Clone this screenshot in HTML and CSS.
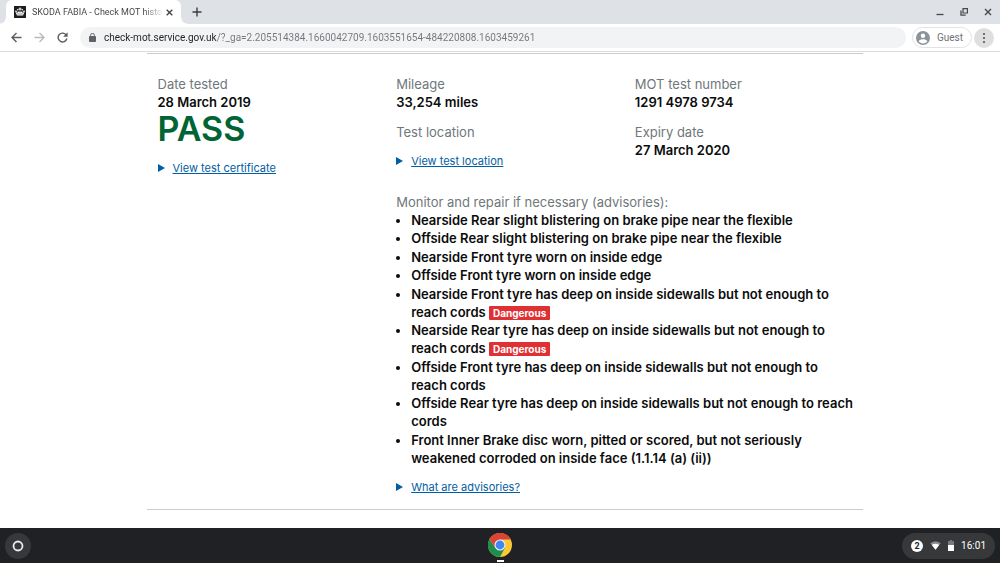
FILE: index.html
```html
<!DOCTYPE html>
<html lang="en">
<head>
  <meta charset="UTF-8">
  <title>SKODA FABIA - Check MOT history</title>
  <link rel="stylesheet" href="styles.css">
</head>
<body>

<header class="browser">
  <div class="tabstrip">
    <div class="tab">
      <svg class="favicon" viewBox="0 0 24 24">
        <rect width="24" height="24" fill="#1d1d1d"/>
        <g fill="#fff">
          <path d="M11 3h2v2h2v2h-2v2h-2V7H9V5h2z"/>
          <circle cx="7.500" cy="7.500" r="1.500"/>
          <circle cx="16.500" cy="7.500" r="1.500"/>
          <circle cx="4" cy="10.500" r="1.700"/>
          <circle cx="20" cy="10.500" r="1.700"/>
          <path d="M3 12l3 7h12l3-7-4 1.500-1-3.500-2.500 3L12 9l-1.500 4L8 10l-1 3.500z"/>
        </g>
        <path d="M6 16h12" stroke="#1d1d1d"/>
      </svg>
      <span class="tab-title">SKODA FABIA - Check MOT histo</span>
      <button class="icon-button" aria-label="Close tab">
        <svg width="7" height="7" viewBox="0 0 7 7"><path d="M.7.7l5.600 5.600M6.300.7L.7 6.300" stroke="#3c4043" stroke-width="1.300"/></svg>
      </button>
    </div>
    <button class="icon-button new-tab" aria-label="New tab">
      <svg width="10" height="10" viewBox="0 0 10 10"><path d="M5 .5v9M.5 5h9" stroke="#3c4043" stroke-width="1.400"/></svg>
    </button>
    <div class="window-buttons">
      <button class="icon-button" aria-label="Minimise">
        <svg width="8" height="8" viewBox="0 0 8 8"><path d="M.5 6.500h7" stroke="#45484c" stroke-width="1.300"/></svg>
      </button>
      <button class="icon-button" aria-label="Restore">
        <svg width="8" height="8" viewBox="0 0 8 8" fill="none" stroke="#45484c"><path d="M3 .6h4.400V5H3z" stroke-width="1.200"/><path d="M1 2.500v4.700h4.700" stroke-width="1.300"/></svg>
      </button>
      <button class="icon-button" aria-label="Close">
        <svg width="8" height="8" viewBox="0 0 8 8"><path d="M1 1l6 6M7 1L1 7" stroke="#45484c" stroke-width="1.400"/></svg>
      </button>
    </div>
  </div>

  <div class="toolbar">
    <button class="icon-button" aria-label="Back">
      <svg width="11" height="11" viewBox="0 0 11 11" fill="none" stroke="#5a5d61" stroke-width="1.400"><path d="M10.500 5.500H1.200M5.500 1L1 5.500 5.500 10"/></svg>
    </button>
    <button class="icon-button" aria-label="Forward">
      <svg width="11" height="11" viewBox="0 0 11 11" fill="none" stroke="#b9bbbe" stroke-width="1.400"><path d="M.5 5.500h9.300M5.500 1L10 5.500 5.500 10"/></svg>
    </button>
    <button class="icon-button" aria-label="Reload">
      <svg width="11" height="11" viewBox="0 0 11 11"><path d="M9.300 3.300A4.400 4.400 0 1 0 9.800 6.500" fill="none" stroke="#5a5d61" stroke-width="1.400"/><path d="M10.600.3v4.500H6.100z" fill="#5a5d61"/></svg>
    </button>
    <div class="omnibox">
      <svg width="7" height="9" viewBox="0 0 7 9"><rect y="3" width="7" height="6" rx=".8" fill="#5f6368"/><path d="M1.600 3.500V2.300a1.900 1.900 0 0 1 3.800 0v1.200" fill="none" stroke="#5f6368"/></svg>
      <input class="url" type="text" aria-label="Address" value="check-mot.service.gov.uk/?_ga=2.205514384.1660042709.1603551654-484220808.1603459261">
    </div>
    <button class="profile">
      <svg width="14" height="14" viewBox="0 0 14 14"><circle cx="7" cy="7" r="7" fill="#8c9299"/><circle cx="7" cy="4.800" r="2.200" fill="#fff"/><path d="M2.600 10.300C3.600 8.700 5.300 8.200 7 8.200s3.400.5 4.400 2.100C10.400 11.700 8.900 12.400 7 12.400s-3.400-.7-4.400-2.100z" fill="#fff"/></svg>
      Guest
    </button>
    <button class="icon-button menu" aria-label="Menu">
      <svg width="4" height="12" viewBox="0 0 4 12" fill="#55585c"><circle cx="2" cy="2" r="1.100"/><circle cx="2" cy="6" r="1.100"/><circle cx="2" cy="10" r="1.100"/></svg>
    </button>
  </div>
</header>

<main class="page">
  <section class="mot-test">
    <div class="column">
      <div class="label">Date tested</div>
      <div class="value">28 March 2019</div>
      <div class="result">PASS</div>
      <details>
        <summary><span>View test certificate</span></summary>
      </details>
    </div>
    <div class="column">
      <div class="label">Mileage</div>
      <div class="value">33,254 miles</div>
      <div class="label second">Test location</div>
      <details>
        <summary><span>View test location</span></summary>
      </details>
    </div>
    <div class="column">
      <div class="label">MOT test number</div>
      <div class="value">1291 4978 9734</div>
      <div class="label second">Expiry date</div>
      <div class="value">27 March 2020</div>
    </div>
    <div class="column advisories">
      <div class="label">Monitor and repair if necessary (advisories):</div>
      <ul>
        <li>Nearside Rear slight blistering on brake pipe near the flexible</li>
        <li>Offside Rear slight blistering on brake pipe near the flexible</li>
        <li>Nearside Front tyre worn on inside edge</li>
        <li>Offside Front tyre worn on inside edge</li>
        <li>Nearside Front tyre has deep on inside sidewalls but not enough to reach cords <span class="tag">Dangerous</span></li>
        <li>Nearside Rear tyre has deep on inside sidewalls but not enough to reach cords <span class="tag">Dangerous</span></li>
        <li>Offside Front tyre has deep on inside sidewalls but not enough to reach cords</li>
        <li>Offside Rear tyre has deep on inside sidewalls but not enough to reach cords</li>
        <li>Front Inner Brake disc worn, pitted or scored, but not seriously weakened corroded on inside face (1.1.14 (a) (ii))</li>
      </ul>
      <details>
        <summary><span>What are advisories?</span></summary>
      </details>
    </div>
  </section>
</main>

<footer class="shelf">
  <button class="launcher" aria-label="Launcher">
    <svg width="12" height="12" viewBox="0 0 12 12"><circle cx="6" cy="6" r="4.500" fill="none" stroke="#e8eaed" stroke-width="1.800"/></svg>
  </button>
  <button class="app" aria-label="Chrome">
    <svg width="24" height="24" viewBox="0 0 24 24">
      <circle cx="12" cy="12" r="12" fill="#fcc934"/>
      <path d="M12 12L7.200 14.800 1.600 6A12 12 0 0 0 12 24l5-9.300z" fill="#1e8e4e"/>
      <path d="M12 6.500h10.700A12 12 0 0 0 1.600 6l5.600 8.800z" fill="#da4437"/>
      <circle cx="12" cy="12" r="5.500" fill="#f1f1f1"/>
      <circle cx="12" cy="12" r="4.400" fill="#4285f4"/>
    </svg>
    <span class="running"></span>
  </button>
  <button class="status">
    <span class="count">2</span>
    <svg width="11" height="9" viewBox="0 0 11 9"><path d="M.3 2.300C3.300 0 7.700 0 10.700 2.300L5.500 8.800z" fill="#8a8c8e"/><path d="M1.800 4C4 2.400 7 2.400 9.200 4L5.500 8.800z" fill="#fff"/></svg>
    <svg width="6" height="11" viewBox="0 0 6 11"><path d="M2 0h2v1h2v5H0V1h2z" fill="#77797b"/><path d="M0 5h6v6H0z" fill="#fff"/></svg>
    <span class="clock">16:01</span>
  </button>
</footer>

</body>
</html>
```
FILE: styles.css
```css
* {
  box-sizing: border-box;
}
body {
  font-family: Roboto, "Liberation Sans", sans-serif;
  background-color: white;
  margin: 0;
  min-height: 100vh;
  display: flex;
  flex-direction: column;
}
button {
  font-family: inherit;
  border: none;
  padding: 0;
  background: none;
  cursor: pointer;
}
svg {
  display: block;
  flex: none;
}

/* browser window */
.tabstrip {
  display: flex;
  height: 24px;
  padding-left: 6px;
  background-color: #dee1e6;
}
.tab {
  position: relative;
  display: flex;
  align-items: center;
  width: 175px;
  padding: 0 8px;
  background-color: white;
  border-radius: 6px 6px 0 0;
}
.tab::before,
.tab::after {
  content: "";
  position: absolute;
  bottom: 0;
  width: 6px;
  height: 6px;
}
.tab::before {
  left: -6px;
  background: radial-gradient(circle at 0 0, transparent 5px, white 6px);
}
.tab::after {
  right: -6px;
  background: radial-gradient(circle at 100% 0, transparent 5px, white 6px);
}
.favicon {
  width: 12px;
  height: 12px;
}
.tab-title {
  flex: 1;
  margin: 0 2px 0 6px;
  overflow: hidden;
  white-space: nowrap;
  font-size: 9px;
  color: #45494d;
  mask-image: linear-gradient(to right, black 85%, transparent);
}
.icon-button {
  display: flex;
  align-items: center;
  justify-content: center;
}
.new-tab {
  margin-left: 11px;
}
.window-buttons {
  display: flex;
  gap: 16px;
  margin-left: auto;
  padding-right: 8px;
}
.toolbar {
  display: flex;
  align-items: center;
  height: 28px;
  padding: 0 6px 0 11px;
  border-bottom: 1px solid #dcdcdc;
}
.toolbar > .icon-button {
  margin-right: 12px;
}
.omnibox {
  flex: 1;
  display: flex;
  align-items: center;
  gap: 8px;
  height: 21px;
  margin-right: 6px;
  padding: 0 9px;
  background-color: #f1f3f4;
  border-radius: 11px;
}
.url {
  flex: 1;
  padding: 0;
  border: none;
  outline: none;
  font-family: inherit;
  font-size: 10px;
  color: transparent;
  /* host name is darker than the rest of the address */
  background: linear-gradient(to right, #202124 113px, #73777b 113px);
  background-clip: text;
}
.profile {
  display: flex;
  align-items: center;
  gap: 7px;
  height: 21px;
  margin-right: 2px;
  padding: 0 8px 0 3px;
  border: 1px solid #e0e2e4;
  border-radius: 11px;
  font-size: 10px;
  color: #6f7377;
}
.toolbar > .menu {
  width: 20px;
  height: 20px;
  margin-right: 0;
  border-radius: 50%;
  background-color: #dfdfdf;
}

/* test result */
.page {
  flex: 1;
  padding: 1px 0 0 9px;
}
.mot-test {
  display: grid;
  grid-template-columns: 1fr 1fr 1fr;
  max-width: 716px;
  margin: 0 auto;
  padding: 21px 0 13px;
  border-top: 1px solid #c9cbcd;
  border-bottom: 1px solid #c9cbcd;
  font-family: Inter, Roboto, sans-serif;
  font-size: 13px;
  line-height: 18px;
  color: #0b0c0c;
}
.column {
  padding: 0 11px;
}
.label {
  color: #6f777b;
}
.second {
  margin-top: 12px;
}
.value {
  font-weight: 600;
}
.result {
  margin-bottom: 12px;
  font-size: 34px;
  line-height: 36px;
  font-weight: 600;
  color: #006435;
}
details {
  margin-top: 11px;
  font-size: 11px;
  color: #005ea5;
}
summary {
  display: flex;
  align-items: center;
  cursor: pointer;
}
summary::before {
  content: "";
  margin-right: 8px;
  border-left: 7px solid #005ea5;
  border-top: 4px solid transparent;
  border-bottom: 4px solid transparent;
}
summary span {
  text-decoration: underline;
}
.result + details {
  margin-top: 0;
}
.advisories {
  grid-column: 2 / 4;
  margin-top: 16px;
  padding-right: 6px;
}
.advisories ul {
  margin: 0;
  padding-left: 15px;
  font-weight: 600;
}
.advisories li:nth-child(even) {
  margin-bottom: 1px;
}
.tag {
  padding: 1px 4px;
  border-radius: 1px;
  background-color: #df3034;
  color: white;
  font-size: 10px;
  line-height: 12px;
  font-weight: bold;
}

/* desktop shelf */
.shelf {
  display: grid;
  grid-template-columns: 1fr auto 1fr;
  align-items: center;
  height: 35px;
  padding: 0 5px;
  background-color: #202124;
}
.launcher {
  display: flex;
  align-items: center;
  justify-content: center;
  width: 26px;
  height: 26px;
  border-radius: 50%;
  background-color: #37383a;
}
.app {
  display: flex;
  flex-direction: column;
  align-items: center;
  gap: 3px;
  padding-top: 4px;
}
.running {
  width: 7px;
  height: 2px;
  background-color: white;
}
.status {
  justify-self: end;
  display: flex;
  align-items: center;
  height: 26px;
  gap: 7px;
  padding: 0 9px;
  border-radius: 13px;
  background-color: #37383a;
  color: white;
}
.count {
  width: 12px;
  height: 12px;
  border-radius: 50%;
  background-color: white;
  color: #202124;
  font-size: 9px;
  line-height: 12px;
  font-weight: bold;
}
.clock {
  font-size: 10px;
}
```
